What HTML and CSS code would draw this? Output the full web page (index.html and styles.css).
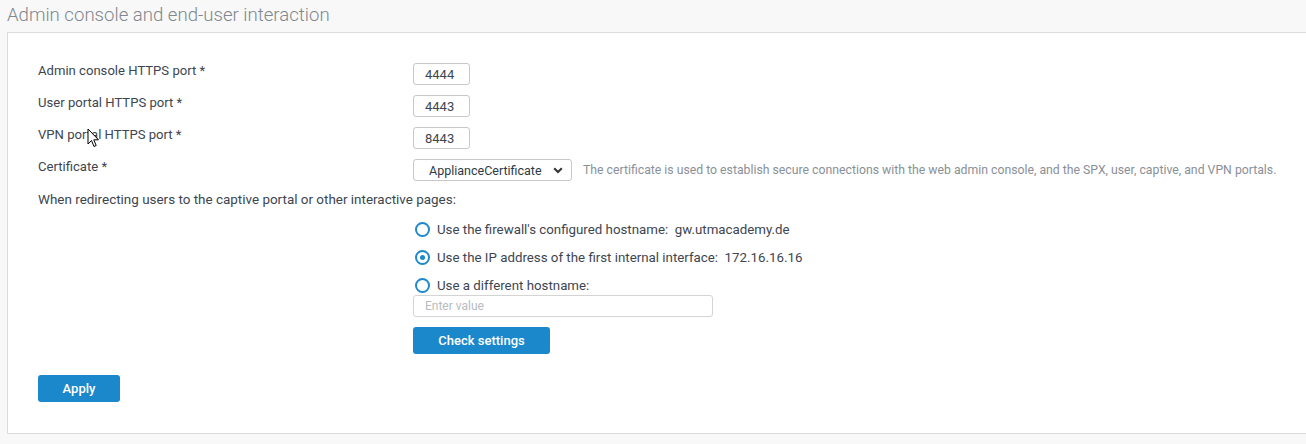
FILE: index.html
```html
<!DOCTYPE html>
<html>
<head>
<meta charset="utf-8">
<link rel="stylesheet" href="styles.css">
</head>
<body>
<h1 class="title">Admin console and end-user interaction</h1>
<section class="panel">
  <div class="row">
    <label class="label">Admin console HTTPS port *</label>
    <input class="port" type="text" value="4444">
  </div>
  <div class="row">
    <label class="label">User portal HTTPS port *</label>
    <input class="port" type="text" value="4443">
  </div>
  <div class="row">
    <label class="label">VPN portal HTTPS port *</label>
    <input class="port" type="text" value="8443">
  </div>
  <div class="row row-cert">
    <label class="label">Certificate *</label>
    <div class="select">
      <span>ApplianceCertificate</span>
      <svg class="chev" width="10" height="7" viewBox="0 0 10 7"><path d="M1.2 1.3 L5 5 L8.8 1.3" fill="none" stroke="#333" stroke-width="2"/></svg>
    </div>
    <span class="help">The certificate is used to establish secure connections with the web admin console, and the SPX, user, captive, and VPN portals.</span>
  </div>
  <p class="redirect">When redirecting users to the captive portal or other interactive pages:</p>
  <div class="options">
    <div class="radio-row r1"><span class="radio"></span><span>Use the firewall's configured hostname:&nbsp; gw.utmacademy.de</span></div>
    <div class="radio-row r2"><span class="radio checked"></span><span>Use the IP address of the first internal interface:&nbsp; 172.16.16.16</span></div>
    <div class="radio-row r3"><span class="radio"></span><span>Use a different hostname:</span></div>
    <input class="host" type="text" placeholder="Enter value">
    <button class="btn check">Check settings</button>
  </div>
  <button class="btn apply">Apply</button>
  <svg class="cursor" width="13" height="20" viewBox="0 0 13 20"><path d="M1 1 L1 16 L4.5 12.5 L7 18.5 L9.2 17.5 L6.8 11.8 L11.5 11.8 Z" fill="#fff" stroke="#000" stroke-width="1" stroke-linejoin="round"/></svg>
</section>
</body>
</html>
```
FILE: styles.css
```css
* { box-sizing: border-box; }
html, body { margin: 0; padding: 0; }
body {
  background: #f8f8f8;
  font-family: Roboto, "Liberation Sans", sans-serif;
  color: #3d4650;
  overflow: hidden;
  height: 444px;
}
.title {
  margin: 0;
  height: 32px;
  padding: 4px 0 0 7px;
  font-size: 18.6px;
  font-weight: 300;
  color: #80878e;
  line-height: 22px;
}
.panel {
  position: relative;
  margin-left: 7px;
  margin-right: -4px;
  height: 402px;
  background: #fff;
  border: 1px solid #dcdcdc;
  padding: 30px 0 0 30px;
  font-size: 13.1px;
}
.row {
  display: flex;
  align-items: center;
  height: 22px;
  margin-bottom: 10px;
}
.row-cert { margin-bottom: 8px; }
.label {
  width: 375px;
  flex: none;
  line-height: 16px;
  margin-top: -6px;
}
.port {
  width: 57px;
  height: 22px;
  border: 1px solid #c8c8c8;
  border-radius: 3px;
  padding: 0 0 0 11px;
  font: inherit;
  font-size: 13px;
  color: #3d4650;
  outline: none;
}
.select {
  width: 159px;
  height: 22px;
  border: 1px solid #c8c8c8;
  border-radius: 3px;
  display: flex;
  align-items: center;
  justify-content: space-between;
  padding: 0 8px 0 15px;
  font-size: 12.5px;
  color: #2e3a46;
}
.help {
  margin-left: 11px;
  font-size: 12.25px;
  color: #8a9097;
}
.redirect {
  margin: 0;
  height: 22px;
  line-height: 22px;
  font-size: 13.45px;
}
.options {
  margin-left: 375px;
  padding-top: 7px;
  display: flex;
  flex-direction: column;
  align-items: flex-start;
  font-size: 13.3px;
}
.radio-row {
  display: flex;
  align-items: center;
  height: 22px;
  margin-bottom: 6px;
}
.radio-row.r3 { margin-bottom: 0; height: 16px; margin-top: 3px; }
.radio {
  width: 15px;
  height: 15px;
  border: 2px solid #1e88cc;
  border-radius: 50%;
  margin: 0 7px 0 2px;
  position: relative;
  flex: none;
}
.radio.checked::after {
  content: "";
  position: absolute;
  left: 3px;
  top: 3px;
  width: 5px;
  height: 5px;
  border-radius: 50%;
  background: #1e88cc;
}
.host {
  margin-top: 2px;
  width: 300px;
  height: 22px;
  border: 1px solid #d4d4d4;
  border-radius: 3px;
  padding: 0 11px;
  font: inherit;
  font-size: 12px;
  outline: none;
}
.host::placeholder { color: #b8bcc0; }
.btn {
  border: none;
  background: #1b88cc;
  color: #fff;
  font-family: inherit;
  font-size: 13px;
  font-weight: 500;
  border-radius: 3px;
  height: 27px;
  padding: 0;
}
.check {
  width: 137px;
  margin-top: 10px;
}
.apply {
  width: 82px;
  margin-top: 21px;
}
.cursor {
  position: absolute;
  left: 79px;
  top: 95px;
}
```
